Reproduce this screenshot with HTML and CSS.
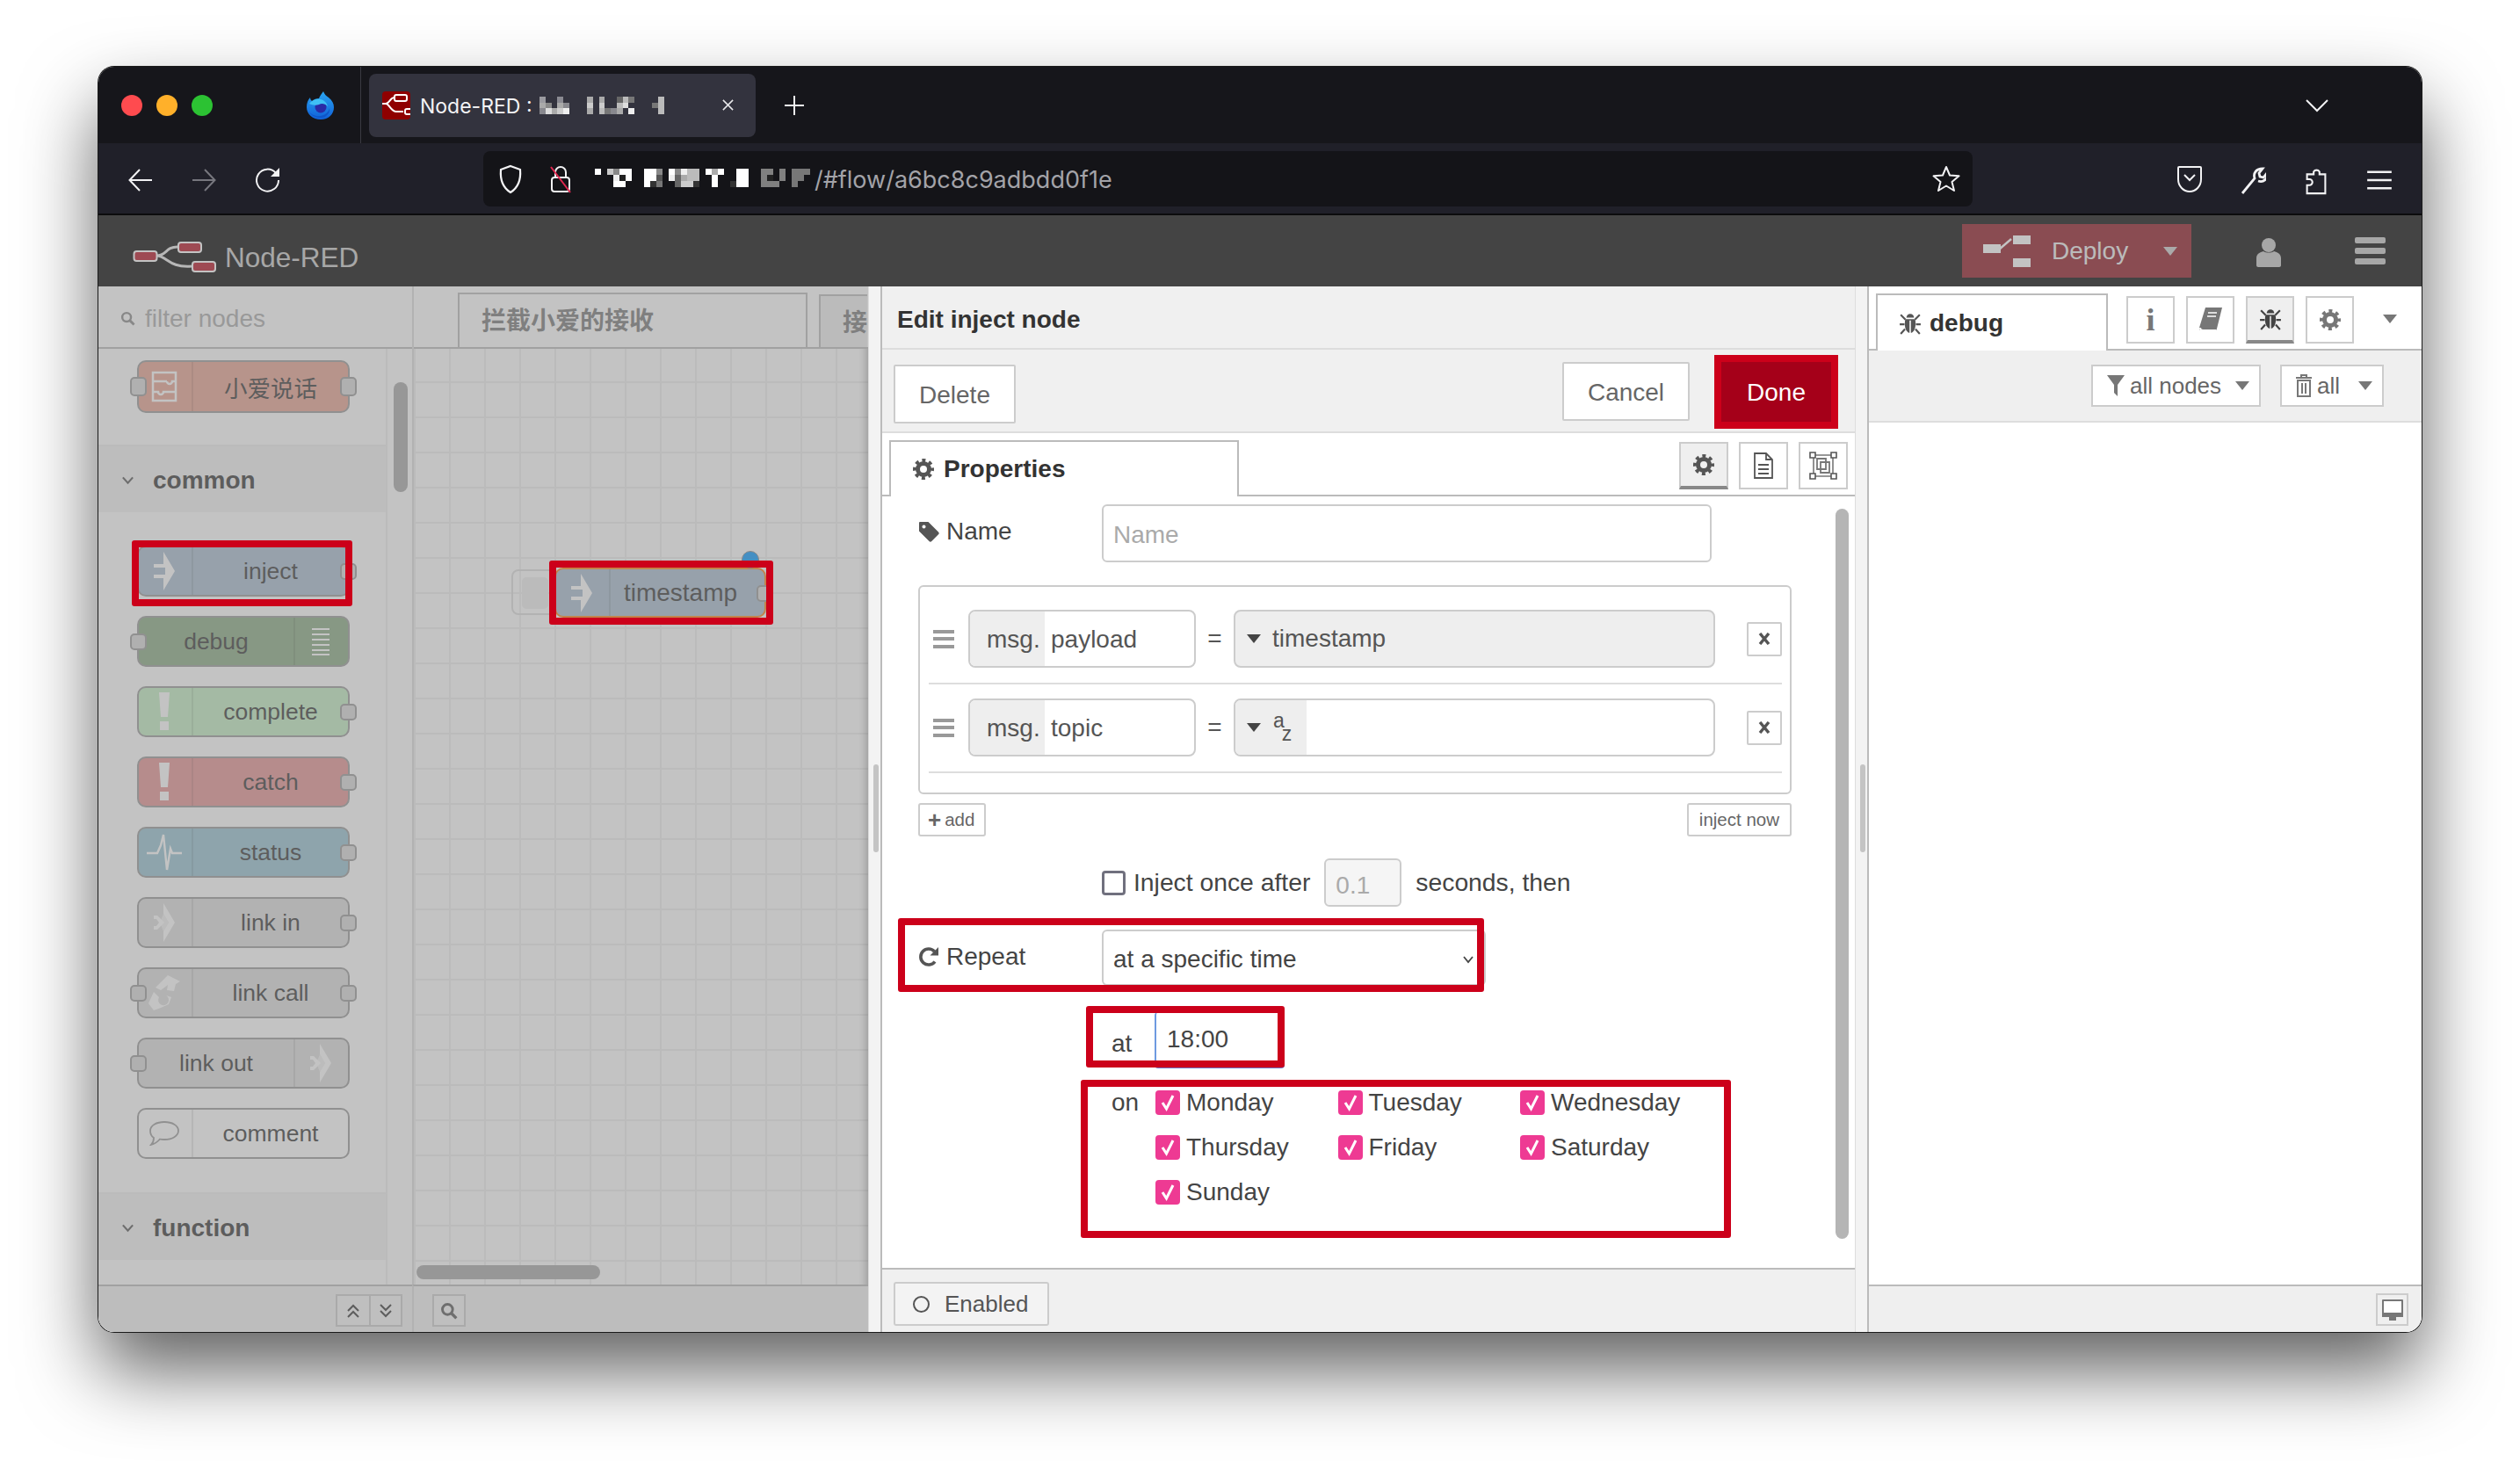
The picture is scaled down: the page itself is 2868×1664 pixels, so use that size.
FILE: index.html
```html
<!DOCTYPE html>
<html lang="en">
<head>
  <meta charset="UTF-8" />
  <title>Node-RED</title>
  <link rel="stylesheet" href="styles.css">
</head>
<body>

<!-- icon sheet -->
<svg class="sprites" width="0" height="0">
  <symbol id="i-gear" viewBox="0 0 24 24">
    <circle cx="12" cy="12" r="6.5" fill="none" stroke="currentColor" stroke-width="5"/>
    <circle cx="12" cy="12" r="10" fill="none" stroke="currentColor" stroke-width="4" stroke-dasharray="3.93 3.93" stroke-dashoffset="1.96"/>
  </symbol>
  <symbol id="i-bug" viewBox="0 0 24 24">
    <path d="M8 6a4 4 0 0 1 8 0z" fill="currentColor"/>
    <path d="M7 7.5h10c1 2 1 9-1 12-1 1.500-2.500 2.500-3.300 2.500V9h-1.400v13c-.8 0-2.300-1-3.300-2.500-2-3-2-10-1-12z" fill="currentColor"/>
    <path d="M2 3l5 5M22 3l-5 5M1 13h5M23 13h-5M2 23l4.500-5M22 23l-4.500-5" stroke="currentColor" stroke-width="2" fill="none"/>
  </symbol>
  <symbol id="i-tag" viewBox="0 0 24 24">
    <path fill-rule="evenodd" d="M2 1h9.500L23 12.500a2 2 0 0 1 0 2.800l-7.700 7.700a2 2 0 0 1-2.800 0L1 11.500V2a1 1 0 0 1 1-1zM6.500 4.500a2 2 0 1 0 .01 0z" fill="currentColor"/>
  </symbol>
  <symbol id="i-repeat" viewBox="0 0 24 24">
    <path d="M19 17.500A9 9 0 1 1 18.500 6" fill="none" stroke="currentColor" stroke-width="3.600"/>
    <path d="M23 1v9.500h-9.500z" fill="currentColor"/>
  </symbol>
  <symbol id="i-search" viewBox="0 0 24 24">
    <circle cx="10" cy="10" r="7" fill="none" stroke="currentColor" stroke-width="3.500"/>
    <path d="M15 15l7 7" stroke="currentColor" stroke-width="4" fill="none"/>
  </symbol>
  <symbol id="i-chev" viewBox="0 0 24 24">
    <path d="M3 7l9 10 9-10" fill="none" stroke="currentColor" stroke-width="3.500"/>
  </symbol>
  <symbol id="i-inject" viewBox="0 0 24 44">
    <path d="M0 14h11V0l13 22-13 22V30H0v-4h13v-8H0z" fill="currentColor"/>
  </symbol>
  <symbol id="i-alert" viewBox="0 0 14 44">
    <path d="M1 0h12l-2 28H3zM2 33h10v10H2z" fill="currentColor"/>
  </symbol>
  <symbol id="i-check" viewBox="0 0 28 28">
    <path d="M8 14l4.500 7L20 6" fill="none" stroke="#fff" stroke-width="3"/>
  </symbol>
  <symbol id="i-remove" viewBox="0 0 14 14">
    <path d="M2 1l10 12M12 1L2 13" fill="none" stroke="currentColor" stroke-width="3.400"/>
  </symbol>
  <symbol id="i-linkarrow" viewBox="0 0 24 44">
    <path d="M0 14h4l8 8-8 8H0V26h3l3-4-3-4H0zM11 0l13 22-13 22V32l6-10-6-10z" fill="currentColor"/>
    <path d="M11 12l6 10-6 10-4-10z" fill="currentColor" opacity=".6"/>
  </symbol>
  <linearGradient id="ff-body" x1="0" y1="0" x2="0" y2="1">
    <stop offset="0" stop-color="#2aa6f2"/>
    <stop offset="1" stop-color="#1060d8"/>
  </linearGradient>
</svg>

<div class="window">

  <!-- browser tabs -->
  <div class="tabbar">
    <span class="light red"></span>
    <span class="light amber"></span>
    <span class="light green"></span>
    <svg class="firefox" viewBox="0 0 32 32">
      <path d="M19 0c1 3 3 5 6 7 4 3 6 7 6 11 0 8-6 14-15 14S0 26 0 18c0-4 1-8 4-11 0 2 1 3 2 4 2-2 5-3 8-3 1-3 3-5 5-8z" fill="url(#ff-body)"/>
      <circle cx="16" cy="18" r="6.500" fill="#2a2aa6"/>
      <path d="M3 14c3-4 8-6 13-5 4 1 7 4 8 8-3-3-7-4-10-2-3 1-7 1-11-1z" fill="#3fc0f5"/>
      <path d="M2 22c3 5 9 7 14 6 5-1 9-4 10-9 1 6-4 11-10 11S4 27 2 22z" fill="#0f55c8"/>
    </svg>
    <span class="tabbar-sep"></span>
    <div class="browser-tab">
      <svg class="favicon" viewBox="0 0 32 32">
        <rect width="32" height="32" rx="4" fill="#8f0000"/>
        <path d="M0 14h4c4 0 5-7 10-7M4 14c4 0 6 9 12 9h8" fill="none" stroke="#fff" stroke-width="2"/>
        <rect x="14" y="4" width="14" height="7" rx="2" fill="#8f0000" stroke="#fff" stroke-width="2"/>
        <rect x="26" y="20" width="8" height="6" rx="2" fill="#8f0000" stroke="#fff" stroke-width="2"/>
      </svg>
      <span class="browser-tab-title">Node-RED :</span>
      <svg class="blur-title" width="142" height="22" viewBox="0 0 21 3" shape-rendering="crispEdges">
        <rect x="0" y="0" width="1" height="1" fill="#9a9aa0"/><rect x="3" y="0" width="1" height="1" fill="#8a8a92"/>
        <rect x="0" y="1" width="1" height="1" fill="#aaa"/><rect x="1" y="1" width="1" height="1" fill="#888"/><rect x="3" y="1" width="1" height="1" fill="#aaa"/><rect x="4" y="1" width="1" height="1" fill="#88888e"/>
        <rect x="0" y="2" width="1" height="1" fill="#88888e"/><rect x="1" y="2" width="1" height="1" fill="#ddd"/><rect x="2" y="2" width="1" height="1" fill="#aaa"/><rect x="3" y="2" width="1" height="1" fill="#ccc"/><rect x="4" y="2" width="1" height="1" fill="#eee"/>
        <rect x="8" y="0" width="1" height="1" fill="#aaa"/><rect x="8" y="1" width="1" height="1" fill="#ccc"/><rect x="8" y="2" width="1" height="1" fill="#aaa"/>
        <rect x="10" y="0" width="1" height="1" fill="#aaa"/><rect x="10" y="1" width="1" height="1" fill="#ccc"/><rect x="10" y="2" width="1" height="1" fill="#bbb"/><rect x="11" y="2" width="1" height="1" fill="#777"/>
        <rect x="12" y="2" width="1" height="1" fill="#88888e"/><rect x="13" y="2" width="1" height="1" fill="#aaa"/><rect x="13" y="1" width="1" height="1" fill="#bbb"/><rect x="14" y="1" width="1" height="1" fill="#ddd"/><rect x="14" y="0" width="1" height="1" fill="#bbb"/><rect x="15" y="0" width="1" height="1" fill="#777"/><rect x="15" y="2" width="1" height="1" fill="#eee"/><rect x="13" y="0" width="1" height="1" fill="#666"/>
        <rect x="19" y="1" width="1" height="1" fill="#777"/><rect x="20" y="0" width="1" height="1" fill="#bbb"/><rect x="20" y="1" width="1" height="1" fill="#bbb"/><rect x="20" y="2" width="1" height="1" fill="#bbb"/>
      </svg>
      <svg class="tab-close" viewBox="0 0 16 16"><path d="M2 2l12 12M14 2L2 14" stroke="#e8e8ea" stroke-width="1.600"/></svg>
    </div>
    <svg class="tab-new" viewBox="0 0 24 24"><path d="M12 1v22M1 12h22" stroke="#f2f2f4" stroke-width="2"/></svg>
    <svg class="tab-list" viewBox="0 0 26 16"><path d="M1 2l12 12L25 2" fill="none" stroke="#f2f2f4" stroke-width="2"/></svg>
  </div>

  <!-- browser toolbar -->
  <div class="toolbar">
    <svg class="tool" viewBox="0 0 28 28"><path d="M27 14H2M13 2L1.500 14 13 26" fill="none" stroke="#f2f2f4" stroke-width="2"/></svg>
    <svg class="tool tool-gap" viewBox="0 0 28 28"><path d="M1 14h25M15 2l11.500 12L15 26" fill="none" stroke="#77777e" stroke-width="2"/></svg>
    <svg class="tool tool-gap" viewBox="0 0 28 28"><path d="M24 6A12.500 12.500 0 1 0 27 14" fill="none" stroke="#f2f2f4" stroke-width="2"/><path d="M28 0v10H18z" fill="#f2f2f4"/></svg>
    <div class="urlbar">
      <svg class="shield" viewBox="0 0 28 34"><path d="M14 2l11 4c1 12-3 21-11 26C6 27 2 18 3 6z" fill="none" stroke="#f2f2f4" stroke-width="2.200"/></svg>
      <svg class="lock" viewBox="0 0 28 34"><path d="M8 15V9a6 6 0 0 1 12 0v6" fill="none" stroke="#f2f2f4" stroke-width="2"/><rect x="4" y="15" width="20" height="16" rx="3" fill="none" stroke="#f2f2f4" stroke-width="2"/><path d="M3 3l22 29" stroke="#e22850" stroke-width="2"/></svg>
      <svg class="blur-url" width="245" height="21" viewBox="0 0 35 3" shape-rendering="crispEdges">
        <rect x="0" y="0" width="1" height="1" fill="#fff"/><rect x="2" y="0" width="1" height="1" fill="#c8c8c8"/><rect x="3" y="0" width="1" height="1" fill="#888"/><rect x="4" y="0" width="2" height="1" fill="#fff"/>
        <rect x="3" y="1" width="1" height="1" fill="#eee"/><rect x="4" y="1" width="1" height="1" fill="#222"/><rect x="5" y="1" width="1" height="1" fill="#fff"/><rect x="3" y="2" width="2" height="1" fill="#fff"/>
        <rect x="8" y="0" width="2" height="1" fill="#fff"/><rect x="10" y="0" width="1" height="1" fill="#888"/><rect x="8" y="1" width="2" height="1" fill="#fff"/><rect x="10" y="1" width="1" height="1" fill="#555"/><rect x="8" y="2" width="1" height="1" fill="#fff"/><rect x="9" y="2" width="1" height="1" fill="#333"/><rect x="10" y="2" width="1" height="1" fill="#777"/>
        <rect x="12" y="0" width="1" height="1" fill="#fff"/><rect x="13" y="0" width="1" height="1" fill="#888"/><rect x="14" y="0" width="1" height="1" fill="#eee"/><rect x="15" y="0" width="2" height="1" fill="#bbb"/>
        <rect x="12" y="1" width="1" height="1" fill="#eee"/><rect x="13" y="1" width="1" height="1" fill="#666"/><rect x="14" y="1" width="1" height="1" fill="#aaa"/><rect x="15" y="1" width="2" height="1" fill="#bbb"/>
        <rect x="13" y="2" width="1" height="1" fill="#666"/><rect x="14" y="2" width="2" height="1" fill="#ccc"/><rect x="16" y="2" width="1" height="1" fill="#333"/>
        <rect x="18" y="0" width="1" height="1" fill="#fff"/><rect x="19" y="0" width="1" height="1" fill="#aaa"/><rect x="20" y="0" width="1" height="1" fill="#fff"/><rect x="19" y="1" width="1" height="2" fill="#fff"/>
        <rect x="22" y="2" width="1" height="1" fill="#333"/><rect x="23" y="0" width="2" height="3" fill="#fff"/>
        <rect x="27" y="0" width="2" height="3" fill="#808080"/><rect x="28" y="1" width="1" height="1" fill="#222"/><rect x="29" y="2" width="1" height="1" fill="#808080"/><rect x="30" y="0" width="1" height="2" fill="#808080"/>
        <rect x="32" y="0" width="3" height="1" fill="#777"/><rect x="32" y="1" width="2" height="1" fill="#777"/><rect x="32" y="2" width="1" height="1" fill="#777"/>
      </svg>
      <span class="url-path">/#flow/a6bc8c9adbdd0f1e</span>
      <svg class="star" viewBox="0 0 32 32"><path d="M16 2l4 9.500 10.500.8-8 6.700 2.500 10L16 23.500 7 29l2.500-10-8-6.700 10.500-.8z" fill="none" stroke="#f2f2f4" stroke-width="2" stroke-linejoin="round"/></svg>
    </div>
    <svg class="tool pocket" viewBox="0 0 30 34"><path d="M3 2h24a1 1 0 0 1 1 1v13c0 8-6 14-13 14S2 24 2 16V3a1 1 0 0 1 1-1z" fill="none" stroke="#f2f2f4" stroke-width="2"/><path d="M9 11l6 6 6-6" fill="none" stroke="#f2f2f4" stroke-width="2"/></svg>
    <svg class="tool tool-wide" viewBox="0 0 30 34"><path d="M3 32l14-17c-2-6 2-11 9-11l-4 5 1 4 4 1 4-5c1 7-4 11-10 9" fill="none" stroke="#f2f2f4" stroke-width="2.800"/></svg>
    <svg class="tool tool-wide" viewBox="0 0 30 36"><path d="M4 34V24h3a3.500 3.500 0 0 0 0-7H4v-6h8V8a4 4 0 0 1 7 0v3h7v23z" fill="none" stroke="#f2f2f4" stroke-width="2.200"/></svg>
    <svg class="tool tool-wide" viewBox="0 0 26 24"><path d="M1 4h24M1 12h24M1 20h24" stroke="#f2f2f4" stroke-width="2"/></svg>
  </div>

  <!-- node-red header -->
  <div class="app-header">
    <svg class="logo" width="96" height="36" viewBox="0 0 96 36">
      <path d="M27 16c12 0 10-10 24-10M27 16c12 0 14 14 40 12" fill="none" stroke="#e6e6e6" stroke-width="3"/>
      <rect x="1.500" y="11" width="26" height="11" rx="3" fill="#b40d1e" stroke="#fff" stroke-width="2"/>
      <rect x="52" y="1" width="26" height="11" rx="3" fill="#b40d1e" stroke="#fff" stroke-width="2"/>
      <rect x="68" y="23" width="26" height="11" rx="3" fill="#b40d1e" stroke="#fff" stroke-width="2"/>
    </svg>
    <span class="app-title">Node-RED</span>
    <div class="deploy">
      <svg class="deploy-icon" width="54" height="36" viewBox="0 0 54 36">
        <path d="M0 10h20v10H0zM34 0h20v10H34zM34 26h20v10H34z" fill="#fff"/>
        <path d="M18 16l14-12" stroke="#fff" stroke-width="2.500"/>
      </svg>
      <span class="deploy-label">Deploy</span>
      <span class="caret caret-deploy"></span>
    </div>
    <svg class="user" width="28" height="34" viewBox="0 0 28 34"><circle cx="14" cy="9" r="8" fill="currentColor"/><path d="M0 32V24c0-5 4-7 8-8 3 2 9 2 12 0 4 1 8 3 8 8v8c0 1-1 2-2 2H2c-1 0-2-1-2-2z" fill="currentColor"/></svg>
    <div class="menu-bars"><span></span><span></span><span></span></div>
    <div class="shade"></div>
  </div>

  <div class="main">

    <!-- dimmed editor on the left -->
    <div class="editor">

      <div class="palette">
        <div class="palette-filter">
          <svg class="ico-search" viewBox="0 0 24 24"><use href="#i-search"/></svg>
          <span>filter nodes</span>
        </div>
        <div class="palette-list">
          <div class="palette-nodes">

            <div class="node node-first node-fn">
              <span class="port port-in"></span>
              <span class="node-icon">
                <svg width="30" height="36" viewBox="0 0 30 36"><path d="M2 2h26v32H2zM2 12h16M28 12h-4a3 3 0 0 1-6 0M2 24h6a3 3 0 0 0 6 0h14" fill="none" stroke="#fff" stroke-width="2.500"/></svg>
              </span>
              <span class="node-label">小爱说话</span>
              <span class="port port-out"></span>
            </div>

            <div class="section-head">
              <svg class="ico-chev" viewBox="0 0 24 24"><use href="#i-chev"/></svg>common
            </div>

            <div class="node-stack">
              <div class="node node-inject">
                <span class="node-icon"><svg width="24" height="44"><use href="#i-inject"/></svg></span>
                <span class="node-label">inject</span>
                <span class="port port-out"></span>
                <span class="mark mark-inject"></span>
              </div>
              <div class="node node-debug">
                <span class="port port-in"></span>
                <span class="node-label">debug</span>
                <span class="node-icon node-icon-right">
                  <svg width="20" height="32" viewBox="0 0 20 32"><path d="M0 2h20M0 8h20M0 14h20M0 20h20M0 26h20M0 31h20" stroke="#fff" stroke-width="2.200"/></svg>
                </span>
              </div>
              <div class="node node-complete">
                <span class="node-icon"><svg width="14" height="44"><use href="#i-alert"/></svg></span>
                <span class="node-label">complete</span>
                <span class="port port-out"></span>
              </div>
              <div class="node node-catch">
                <span class="node-icon"><svg width="14" height="44"><use href="#i-alert"/></svg></span>
                <span class="node-label">catch</span>
                <span class="port port-out"></span>
              </div>
              <div class="node node-status">
                <span class="node-icon">
                  <svg width="40" height="44" viewBox="0 0 40 44"><path d="M0 23h12l4-9 3-12 4 40 4-24 2 5h11" fill="none" stroke="#fff" stroke-width="2.400"/></svg>
                </span>
                <span class="node-label">status</span>
                <span class="port port-out"></span>
              </div>
              <div class="node node-link">
                <span class="node-icon"><svg width="24" height="44"><use href="#i-linkarrow"/></svg></span>
                <span class="node-label">link in</span>
                <span class="port port-out"></span>
              </div>
              <div class="node node-link">
                <span class="port port-in"></span>
                <span class="node-icon">
                  <svg width="36" height="40" viewBox="0 0 36 40"><path d="M22 0l14 7-5 3-2 8-8-1 1-6-8 6-6-3zM0 32l6-13 6 6a6 6 0 1 0 8-2l6 2-3 8-9 4-8 3z" fill="#fff"/></svg>
                </span>
                <span class="node-label">link call</span>
                <span class="port port-out"></span>
              </div>
              <div class="node node-link">
                <span class="port port-in"></span>
                <span class="node-label">link out</span>
                <span class="node-icon node-icon-right"><svg width="24" height="44"><use href="#i-linkarrow"/></svg></span>
              </div>
              <div class="node node-comment">
                <span class="node-icon">
                  <svg width="34" height="28" viewBox="0 0 34 28"><path d="M17 1c9 0 16 4 16 10s-7 10-16 10c-2 0-3 0-5-.5C9 24 6 26 2 27c2-2 3-5 3-8-3-2-4-5-4-8C1 5 8 1 17 1z" fill="none" stroke="#999" stroke-width="1.800"/></svg>
                </span>
                <span class="node-label">comment</span>
              </div>
            </div>

            <div class="section-head">
              <svg class="ico-chev" viewBox="0 0 24 24"><use href="#i-chev"/></svg>function
            </div>
          </div>
          <div class="palette-gutter"><span class="thumb-v"></span></div>
        </div>
        <div class="palette-foot">
          <span class="foot-btn foot-btn-joined">
            <svg width="16" height="18" viewBox="0 0 16 18"><path d="M2 9l6-6 6 6M2 16l6-6 6 6" fill="none" stroke="#333" stroke-width="2"/></svg>
          </span>
          <span class="foot-btn">
            <svg width="16" height="18" viewBox="0 0 16 18"><path d="M2 2l6 6 6-6M2 9l6 6 6-6" fill="none" stroke="#333" stroke-width="2"/></svg>
          </span>
        </div>
      </div>

      <div class="workspace">
        <div class="ws-tabs">
          <div class="ws-tab ws-tab-active">拦截小爱的接收</div>
          <div class="ws-tab ws-tab-next">接</div>
        </div>
        <div class="ws-canvas">
          <span class="inject-btn"><span></span></span>
          <div class="node node-inject canvas-node">
            <span class="node-icon"><svg width="24" height="44"><use href="#i-inject"/></svg></span>
            <span class="node-label">timestamp</span>
            <span class="port port-out"></span>
          </div>
          <span class="changed-dot"></span>
          <span class="mark mark-canvas"></span>
          <span class="thumb-h"></span>
        </div>
        <div class="ws-foot">
          <span class="foot-btn foot-btn-search"><svg width="20" height="20" viewBox="0 0 24 24"><use href="#i-search"/></svg></span>
        </div>
      </div>

      <div class="shade"></div>
    </div>

    <div class="splitter"><span></span></div>

    <!-- edit dialog -->
    <div class="tray">
      <div class="tray-title">Edit inject node</div>

      <div class="tray-actions">
        <span class="btn btn-delete">Delete</span>
        <span class="btn btn-cancel">Cancel</span>
        <span class="btn btn-done">Done</span>
      </div>

      <div class="tray-tabs">
        <div class="tray-tab"><svg width="24" height="24"><use href="#i-gear"/></svg>Properties</div>
        <span class="icon-btn icon-btn-on"><svg width="24" height="24"><use href="#i-gear"/></svg></span>
        <span class="icon-btn">
          <svg width="24" height="30" viewBox="0 0 24 30"><path d="M2 1h13l7 7v21H2zM15 1v7h7M6 14h12M6 19h12M6 24h12" fill="none" stroke="#555" stroke-width="1.800"/></svg>
        </span>
        <span class="icon-btn">
          <svg width="32" height="32" viewBox="0 0 32 32"><path d="M5 4h22v24H5z" fill="none" stroke="#777" stroke-width="1.600"/><path d="M1 1h6v6H1zM25 1h6v6h-6zM1 25h6v6H1zM25 25h6v6h-6z" fill="#fff" stroke="#555" stroke-width="1.600"/><path d="M9 8h10v12H9zM13 12h10v12H13z" fill="none" stroke="#777" stroke-width="1.800"/></svg>
        </span>
      </div>

      <div class="tray-body">
        <span class="thumb-tray"></span>

        <div class="form-row">
          <label class="form-label"><svg width="24" height="24"><use href="#i-tag"/></svg>Name</label>
          <input class="text-input name-input" placeholder="Name" />
        </div>

        <div class="prop-list">
          <div class="prop-row">
            <span class="handle"></span>
            <div class="typed msg-field"><span class="typed-prefix">msg.</span><span class="typed-value">payload</span></div>
            <span class="equals">=</span>
            <div class="typed value-field value-field-ts"><span class="caret caret-dark"></span><span>timestamp</span></div>
            <span class="row-remove"><svg width="14" height="14"><use href="#i-remove"/></svg></span>
          </div>
          <div class="prop-row">
            <span class="handle"></span>
            <div class="typed msg-field"><span class="typed-prefix">msg.</span><span class="typed-value">topic</span></div>
            <span class="equals">=</span>
            <div class="typed value-field">
              <span class="str-type"><span class="caret caret-dark"></span><span class="az"><span>a</span><span>z</span></span></span>
            </div>
            <span class="row-remove"><svg width="14" height="14"><use href="#i-remove"/></svg></span>
          </div>
        </div>

        <div class="list-actions">
          <span class="mini-btn"><b>+</b> add</span>
          <span class="mini-btn">inject now</span>
        </div>

        <div class="once-row">
          <span class="box"></span>
          <span class="once-text">Inject once after</span>
          <input class="delay-input" value="0.1" />
          <span class="once-text">seconds, then</span>
        </div>

        <div class="form-row repeat-row">
          <label class="form-label"><svg width="24" height="24"><use href="#i-repeat"/></svg>Repeat</label>
          <div class="select-box">at a specific time
            <svg width="12" height="10" viewBox="0 0 12 10"><path d="M1 2l5 6 5-6" fill="none" stroke="#444" stroke-width="1.800"/></svg>
          </div>
          <span class="mark mark-repeat"></span>
        </div>

        <div class="at-row">
          <span class="at-label">at</span>
          <span class="time-input">18:00</span>
          <span class="mark mark-at"></span>
        </div>

        <div class="days-row">
          <span class="on-label">on</span>
          <div class="days">
            <label class="day"><span class="tick"><svg width="28" height="28"><use href="#i-check"/></svg></span>Monday</label>
            <label class="day"><span class="tick"><svg width="28" height="28"><use href="#i-check"/></svg></span>Tuesday</label>
            <label class="day"><span class="tick"><svg width="28" height="28"><use href="#i-check"/></svg></span>Wednesday</label>
            <label class="day"><span class="tick"><svg width="28" height="28"><use href="#i-check"/></svg></span>Thursday</label>
            <label class="day"><span class="tick"><svg width="28" height="28"><use href="#i-check"/></svg></span>Friday</label>
            <label class="day"><span class="tick"><svg width="28" height="28"><use href="#i-check"/></svg></span>Saturday</label>
            <label class="day"><span class="tick"><svg width="28" height="28"><use href="#i-check"/></svg></span>Sunday</label>
          </div>
          <span class="mark mark-days"></span>
        </div>
      </div>

      <div class="tray-foot">
        <span class="enabled-btn"><span class="ring"></span>Enabled</span>
      </div>
    </div>

    <div class="splitter"><span></span></div>

    <!-- debug sidebar -->
    <div class="sidebar">
      <div class="side-tabs">
        <div class="side-tab"><svg width="26" height="26"><use href="#i-bug"/></svg>debug</div>
        <span class="icon-btn side-btn side-btn-first"><span class="info-i">i</span></span>
        <span class="icon-btn side-btn">
          <svg width="28" height="30" viewBox="0 0 28 30"><path d="M8 1h19l-6 24c0 1-1 2-2 2H3c-2 0-2-2-2-3z" fill="#777"/><path d="M2 24c0 2 1 3 3 3h15" fill="none" stroke="#fff" stroke-width="2"/><path d="M11 7h10M10 11h10" stroke="#fff" stroke-width="1.500"/></svg>
        </span>
        <span class="icon-btn side-btn icon-btn-on"><svg width="26" height="26" class="ico-dark"><use href="#i-bug"/></svg></span>
        <span class="icon-btn side-btn"><svg width="24" height="24" class="ico-soft"><use href="#i-gear"/></svg></span>
        <span class="caret caret-side"></span>
      </div>
      <div class="side-toolbar">
        <span class="side-tool side-tool-nodes">
          <svg width="20" height="26" viewBox="0 0 20 26"><path d="M0 1h20l-8 11v13l-4-4v-9z" fill="#777"/></svg>
          all nodes<span class="caret caret-tool"></span>
        </span>
        <span class="side-tool side-tool-all">
          <svg width="18" height="26" viewBox="0 0 18 26"><path d="M6 4V1h6v3M0 4h18M2 7h14v18H2zM7 10v12M11 10v12" fill="none" stroke="#777" stroke-width="2"/></svg>
          all<span class="caret caret-tool"></span>
        </span>
      </div>
      <div class="side-content"></div>
      <div class="side-foot">
        <span class="monitor-btn">
          <svg width="26" height="26" viewBox="0 0 26 26"><path d="M1 2a1 1 0 0 1 1-1h22a1 1 0 0 1 1 1v19H1z" fill="#777"/><path d="M3 3h20v13H3z" fill="#fff"/><path d="M9 21h8v4H9z" fill="#777"/></svg>
        </span>
      </div>
    </div>

  </div>
</div>

</body>
</html>
```

FILE: styles.css
```css
* { margin: 0; padding: 0; box-sizing: border-box; }
body {
  width: 2868px;
  height: 1664px;
  overflow: hidden;
  padding: 76px 112px;
  background: #fff;
  font-family: "Liberation Sans", "Noto Sans CJK SC", sans-serif;
  font-size: 28px;
  color: #555;
}

.sprites { position: absolute; }

.window {
  width: 2644px;
  height: 1440px;
  border-radius: 18px;
  overflow: hidden;
  display: flex;
  flex-direction: column;
  box-shadow: 0 0 0 1px #1a1a1a, 0 44px 86px rgba(0,0,0,0.62);
}

/* browser tabs */
.tabbar {
  height: 87px;
  flex: none;
  display: flex;
  align-items: center;
  background: #16161b;
  padding-left: 26px;
}
.light { width: 24px; height: 24px; border-radius: 50%; margin-right: 16px; flex: none; }
.light.red { background: #ff4b4f; }
.light.amber { background: #ffb02a; }
.light.green { background: #2cc233; }
.firefox { width: 32px; height: 32px; margin-left: 91px; flex: none; }
.tabbar-sep { width: 1px; height: 87px; background: #3a3a42; margin-left: 29px; }
.browser-tab {
  width: 440px;
  height: 72px;
  margin-left: 9px;
  display: flex;
  align-items: center;
  padding: 0 24px 0 15px;
  background: #33333e;
  border-radius: 8px;
}
.favicon { width: 32px; height: 32px; flex: none; }
.browser-tab-title { margin-left: 11px; margin-top: 2px; font-family: Inter, sans-serif; font-size: 23px; color: #f4f4f6; white-space: nowrap; }
.blur-title { margin-left: 8px; flex: none; }
.tab-close { width: 15px; height: 15px; margin-left: auto; }
.tab-new { width: 24px; height: 24px; margin-left: 32px; }
.tab-list { width: 26px; height: 16px; margin-left: auto; margin-right: 106px; }

/* browser toolbar */
.toolbar {
  height: 82px;
  flex: none;
  display: flex;
  align-items: center;
  padding-left: 34px;
  background: #202029;
  border-bottom: 2px solid #0b0b0d;
}
.tool { width: 28px; height: 28px; flex: none; margin-top: 3px; }
.tool-gap { margin-left: 44px; }
.urlbar {
  width: 1695px;
  height: 63px;
  margin-left: 232px;
  margin-top: 1px;
  display: flex;
  align-items: center;
  padding: 0 14px 0 17px;
  background: #141418;
  border-radius: 8px;
}
.shield { width: 28px; height: 34px; }
.lock { width: 28px; height: 34px; margin-left: 29px; }
.blur-url { margin-left: 25px; margin-top: -2px; flex: none; }
.url-path { margin-left: 5px; margin-top: 1px; font-family: Inter, sans-serif; font-size: 27px; color: #a3a3a8; }
.star { width: 32px; height: 32px; margin-left: auto; }
.pocket { width: 30px; height: 34px; margin-left: 232px; }
.tool-wide { width: 30px; height: 34px; margin-left: 42px; }

/* node-red header */
.app-header {
  height: 81px;
  flex: none;
  position: relative;
  display: flex;
  align-items: center;
  padding-left: 39px;
  background: #000;
  color: #c7c7c7;
}
.logo { margin-top: 14px; flex: none; }
.app-title { margin-left: 9px; font-size: 31.500px; margin-top: 15px; }
.deploy {
  width: 261px;
  height: 61px;
  margin-left: auto;
  display: flex;
  align-items: center;
  padding-left: 24px;
  background: #8c101c;
  color: #eee;
}
.deploy-label { margin-left: 24px; }
.caret { display: inline-block; width: 0; height: 0; border-left: 8px solid transparent; border-right: 8px solid transparent; border-top: 10px solid #777; }
.caret-deploy { margin-left: 40px; border-top-color: #ccc; }
.user { margin-left: 74px; margin-top: 2px; flex: none; }
.menu-bars { margin-left: 84px; margin-right: 41px; margin-top: 5px; width: 35px; flex: none; }
.menu-bars span { display: block; height: 7px; border-radius: 2px; background: #c7c7c7; margin-bottom: 5px; }
.shade {
  position: absolute;
  inset: 0;
  z-index: 1;
  background: rgba(136,136,136,0.5);
}

/* main area */
.main { flex: 1; display: flex; min-height: 0; }
.editor { width: 876px; flex: none; position: relative; display: flex; }

/* palette */
.palette { width: 359px; flex: none; display: flex; flex-direction: column; border-right: 2px solid #ddd; background: #fff; }
.palette-filter {
  height: 71px;
  flex: none;
  display: flex;
  align-items: center;
  padding: 4px 0 0 25px;
  border-bottom: 2px solid #bbb;
  color: #aaa;
}
.ico-search { width: 17px; height: 17px; margin-right: 11px; color: #888; }
.palette-list { flex: 1; display: flex; min-height: 0; }
.palette-nodes { width: 329px; flex: none; border-right: 2px solid #eee; padding-top: 13px; overflow: visible; }
.palette-gutter { flex: 1; padding: 38px 0 0 7px; }
.thumb-v { display: block; width: 16px; height: 125px; border-radius: 8px; background: #a6a6a6; }
.section-head {
  height: 77px;
  display: flex;
  align-items: center;
  padding: 2px 0 0 26px;
  font-weight: bold;
  color: #333;
  background: #f3f3f3;
  border-top: 2px solid #eee;
}
.ico-chev { width: 15px; height: 15px; margin-right: 21px; color: #555; }
.node-first { margin-top: 0; margin-bottom: 36px; }
.node-stack { padding-top: 38px; height: 774px; }

.node {
  position: relative;
  width: 242px;
  height: 58px;
  margin-left: 44px;
  display: flex;
  align-items: center;
  border: 2px solid #999;
  border-radius: 10px;
  font-size: 26.500px;
  color: #333;
  background: #fff;
}
.node-stack .node { margin-bottom: 22px; }
.node-icon { width: 62px; height: 100%; padding-right: 3px; flex: none; display: flex; align-items: center; justify-content: center; color: #fff; border-right: 2px solid rgba(0,0,0,0.1); }
.node-icon-right { border-right: none; border-left: 2px solid rgba(0,0,0,0.1); }
.node-label { flex: 1; text-align: center; white-space: nowrap; padding-top: 1px; }
.port { position: absolute; top: 18px; width: 19px; height: 19px; border: 2px solid #999; border-radius: 5px; background: #d9d9d9; }
.port-in { left: -10px; }
.port-out { right: -10px; }
.node-fn { background: #e7a08e; height: 60px; }
.node-fn .port { width: 19px; height: 22px; top: 17px; }
.node-inject { background: #a6bbcf; }
.node-debug { background: #87a980; }
.node-complete { background: #c0edc0; }
.node-catch { background: #e49191; }
.node-status { background: #94c1d0; }
.node-link { background: #ddd; }
.node-comment { background: #fff; }

/* red annotation frames */
.mark { position: absolute; border: 8px solid #cc001a; border-radius: 3px; z-index: 2; }
.mark-inject { left: -8px; right: -5px; top: -8px; bottom: -13px; }
.mark-canvas { left: 154px; top: 241px; width: 255px; height: 73px; }
.mark-repeat { left: -23px; top: -13px; width: 667px; height: 84px; }
.mark-at { left: -29px; top: -7px; width: 226px; height: 70px; }
.mark-days { left: -35px; top: -12px; width: 740px; height: 180px; }

.palette-foot {
  height: 54px;
  flex: none;
  display: flex;
  justify-content: flex-end;
  padding: 9px 11px 0 0;
  background: #f3f3f3;
  border-top: 2px solid #bbb;
}
.foot-btn { width: 38px; height: 37px; display: flex; align-items: center; justify-content: center; border: 2px solid #ccc; background: #f6f6f6; color: #666; }
.foot-btn-joined { border-right: none; }

/* workspace */
.workspace { flex: 1; display: flex; flex-direction: column; min-width: 0; background: #fff; }
.ws-tabs {
  height: 71px;
  flex: none;
  display: flex;
  align-items: flex-end;
  padding-left: 50px;
  overflow: hidden;
  border-bottom: 2px solid #bbb;
}
.ws-tab {
  height: 62px;
  margin-bottom: -2px;
  padding-left: 25px;
  flex: none;
  font-weight: bold;
  line-height: 62px;
  color: #777;
  background: #eee;
  border: 2px solid #bbb;
  border-bottom: none;
  margin-left: 13px;
}
.ws-tab-active { width: 398px; margin-left: 0; background: #fff; height: 64px; }
.ws-tab-next { border-right: none; }
.ws-canvas {
  flex: 1;
  position: relative;
  background-color: #fff;
  background-image: linear-gradient(#eee 2px, transparent 2px), linear-gradient(90deg, #eee 2px, transparent 2px);
  background-size: 40px 40px;
  background-position: 0 -3px, 0 0;
  box-shadow: inset -12px 0 10px -10px rgba(0,0,0,0.35);
}
.canvas-node { position: absolute; left: 160px; top: 249px; width: 241px; height: 57px; margin: 0; font-size: 28px; border-color: #ff7f0e; }
.canvas-node .node-label { padding-right: 16px; }
.inject-btn { position: absolute; left: 111px; top: 251px; width: 54px; height: 52px; padding: 7px 10px; border: 2px solid #ddd; border-radius: 8px; }
.inject-btn span { display: block; width: 30px; height: 36px; border-radius: 5px; background: #eee; }
.changed-dot { position: absolute; left: 373px; top: 230px; width: 20px; height: 20px; border-radius: 50%; background: #0096ff; border: 1px solid #888; }
.thumb-h { position: absolute; left: 3px; top: 1043px; width: 209px; height: 16px; border-radius: 8px; background: #a6a6a6; }
.ws-foot { height: 54px; flex: none; padding: 9px 0 0 21px; background: #f3f3f3; border-top: 2px solid #bbb; border-left: 2px solid #ddd; margin-left: -2px; }
.foot-btn-search { width: 38px; color: #555; }

/* splitters between the panels */
.splitter { width: 16px; flex: none; padding: 544px 0 0 5px; background: #f3f3f3; border-left: 1px solid #ddd; border-right: 2px solid #bbb; }
.splitter span { display: block; width: 6px; height: 100px; border-radius: 3px; background: #c4c4c4; }

/* tray */
.tray { width: 1107px; flex: none; display: flex; flex-direction: column; background: #fff; position: relative; }
.tray-title { height: 72px; flex: none; padding-left: 17px; line-height: 75px; font-weight: bold; color: #333; background: #f0f0f0; border-bottom: 2px solid #ddd; }
.tray-actions { height: 95px; flex: none; display: flex; align-items: flex-start; padding: 14px 27px 0 13px; background: #f0f0f0; border-bottom: 2px solid #ddd; }
.btn { display: flex; align-items: center; justify-content: center; height: 67px; padding-top: 2px; color: #666; background: #fff; border: 2px solid #ccc; border-radius: 2px; }
.btn-delete { width: 139px; margin-top: 3px; }
.btn-cancel { width: 145px; margin-left: auto; }
.btn-done { width: 125px; height: 68px; margin-left: 36px; color: #fff; background: #a50019; border-color: #a50019; border-radius: 0; outline: 8px solid #cc001a; }

.tray-tabs { height: 72px; flex: none; display: flex; align-items: flex-start; padding: 8px 8px 0 8px; background: #fff; border-bottom: 2px solid #bbb; }
.tray-tab { width: 398px; height: 64px; display: flex; align-items: center; padding-left: 25px; font-weight: bold; color: #333; background: #fff; border: 2px solid #bbb; border-bottom: none; }
.tray-tab svg { margin-right: 11px; color: #555; }
.icon-btn { width: 56px; height: 54px; margin-left: 12px; display: flex; align-items: center; justify-content: center; border: 2px solid #ccc; color: #555; background: #fff; margin-top: 2px; }
.tray-tab + .icon-btn { margin-left: auto; }
.icon-btn-on { background: #efefef; border-bottom: 4px solid #888; }

.tray-body { flex: 1; position: relative; padding: 9px 0 0 41px; min-height: 0; }
.thumb-tray { position: absolute; right: 7px; top: 14px; width: 15px; height: 831px; border-radius: 8px; background: #b5b5b5; }
.form-row { display: flex; position: relative; }
.form-label { width: 209px; flex: none; display: flex; align-items: center; height: 61px; color: #444; }
.form-label svg { margin-right: 8px; color: #555; }
.text-input, .delay-input { font-family: "Liberation Sans", sans-serif; font-size: 28px; border: 2px solid #ccc; border-radius: 6px; outline: none; color: #555; }
.text-input::placeholder { color: #aaa; }
.name-input { width: 694px; height: 66px; padding: 4px 11px 0; }

.prop-list { width: 994px; height: 238px; margin-top: 26px; padding-top: 26px; border: 2px solid #ccc; border-radius: 6px; }
.prop-row { display: flex; align-items: center; margin: 0 9px 16px 10px; padding-bottom: 17px; border-bottom: 2px solid #ddd; }
.handle { width: 24px; height: 21px; margin-left: 5px; flex: none; border-top: 4px solid #999; border-bottom: 4px solid #999; position: relative; }
.handle::after { content: ""; position: absolute; left: 0; right: 0; top: 4.500px; height: 4px; background: #999; }
.typed { display: flex; align-items: center; height: 66px; border: 2px solid #ccc; border-radius: 8px; overflow: hidden; color: #555; flex: none; }
.msg-field { width: 259px; margin-left: 16px; }
.typed-prefix { width: 85px; height: 100%; flex: none; padding-left: 19px; line-height: 64px; background: #eee; }
.typed-value { padding: 2px 0 0 7px; }
.equals { width: 43px; flex: none; text-align: center; }
.value-field { width: 548px; }
.value-field-ts { background: #eee; padding-left: 13px; }
.caret-dark { border-top-color: #444; margin-right: 13px; }
.str-type { width: 81px; height: 100%; display: flex; align-items: center; padding-left: 13px; background: #eee; }
.az { display: flex; align-items: flex-start; height: 38px; font-size: 23px; line-height: 1; margin-left: 1px; }
.az span:last-child { margin-top: 15px; margin-left: -3px; }
.row-remove { width: 40px; height: 39px; margin-left: 36px; flex: none; display: flex; align-items: center; justify-content: center; border: 2px solid #ccc; border-radius: 2px; color: #555; }

.list-actions { width: 994px; margin-top: 10px; display: flex; justify-content: space-between; }
.mini-btn { height: 38px; padding: 0 12px; display: flex; align-items: center; font-size: 20.500px; color: #666; border: 2px solid #ccc; border-radius: 3px; }
.mini-btn b { font-size: 26px; margin-right: 4px; }
.mini-btn:first-child { padding: 0 11px 0 9px; }

.once-row { display: flex; align-items: center; height: 55px; margin: 25px 0 0 209px; color: #444; }
.once-text { font-size: 28.300px; }
.box { width: 27px; height: 28px; flex: none; border: 3px solid #70707e; border-radius: 4px; margin-right: 9px; }
.delay-input { width: 88px; height: 55px; margin: 0 16px; padding: 6px 11px 0; color: #aaa; background: #f5f5f5; }

.repeat-row { margin-top: 26px; height: 64px; }
.select-box { width: 437px; height: 64px; display: flex; align-items: center; padding: 3px 12px 0 11px; color: #444; border: 2px solid #ccc; border-radius: 6px; white-space: nowrap; }
.select-box svg { margin-left: auto; }

.at-row { position: relative; margin: 30px 0 0 220px; height: 64px; display: flex; color: #444; }
.at-label { width: 49px; padding-top: 20px; }
.time-input { width: 148px; height: 64px; padding: 6px 0 0 12px; line-height: 50px; border-left: 2px solid #6e9ae0; border-bottom: 3px solid #6e78c8; border-radius: 4px; }

.days-row { position: relative; margin: 25px 0 0 220px; display: flex; color: #444; }
.on-label { width: 50px; line-height: 28px; }
.days { display: grid; grid-template-columns: repeat(3, 207.500px); grid-auto-rows: 51px; }
.day { display: flex; align-items: flex-start; line-height: 28px; }
.tick { width: 28px; height: 28px; flex: none; margin-right: 7px; border-radius: 4px; background: #ee3a93; }

.tray-foot { height: 73px; flex: none; padding: 14px 0 0 13px; background: #f0f0f0; border-top: 2px solid #bbb; }
.enabled-btn { width: 177px; height: 50px; display: flex; align-items: center; padding-left: 20px; font-size: 26px; color: #555; background: #f3f3f3; border: 2px solid #ccc; border-radius: 3px; }
.ring { width: 19px; height: 19px; margin-right: 17px; border: 2px solid #555; border-radius: 50%; }

/* sidebar */
.sidebar { flex: 1; display: flex; flex-direction: column; background: #fff; min-width: 0; }
.side-tabs { height: 73px; flex: none; display: flex; align-items: flex-start; padding: 8px 0 0 8px; border-bottom: 2px solid #bbb; }
.side-tab { width: 264px; height: 65px; display: flex; align-items: center; padding-left: 24px; font-weight: bold; color: #333; background: #fff; border: 2px solid #bbb; border-bottom: none; }
.side-tab svg { margin-right: 9px; color: #555; }
.side-btn { width: 55px; margin-left: 13px; margin-top: 3px; color: #777; }
.side-btn-first { margin-left: 21px; }
.info-i { font-family: "Liberation Serif", serif; font-weight: bold; font-size: 36px; color: #777; line-height: 1; }
.ico-dark { color: #444; }
.ico-soft { color: #777; }
.caret-side { margin: 24px 0 0 33px; }
.side-toolbar { height: 82px; flex: none; display: flex; justify-content: flex-end; padding: 16px 43px 0 0; background: #efefef; border-bottom: 2px solid #ddd; }
.side-tool { height: 48px; display: flex; align-items: center; padding-left: 16px; font-size: 26px; color: #666; background: #fff; border: 2px solid #ccc; }
.side-tool svg { margin-right: 6px; flex: none; }
.side-tool-nodes { width: 193px; }
.side-tool-all { width: 118px; margin-left: 22px; }
.caret-tool { margin-left: auto; margin-right: 11px; }
.side-content { flex: 1; }
.side-foot { height: 54px; flex: none; display: flex; justify-content: flex-end; padding: 8px 15px 0 0; background: #efefef; border-top: 2px solid #bbb; }
.monitor-btn { width: 37px; height: 37px; display: flex; align-items: center; justify-content: center; border: 2px solid #ccc; }
```
